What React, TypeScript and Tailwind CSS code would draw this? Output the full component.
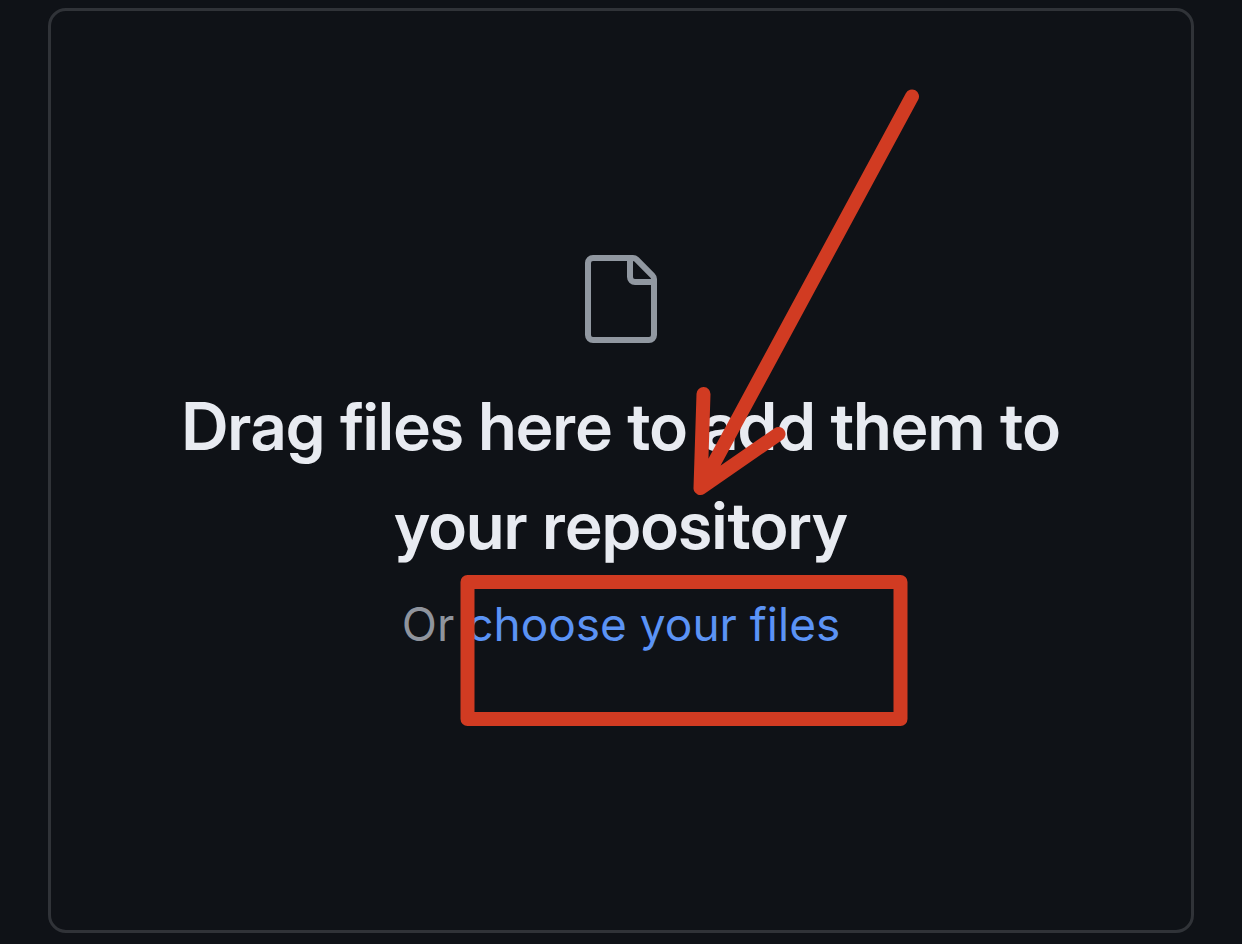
export default function App() {
  return (
    <main className="min-h-screen bg-[#0f1217] px-12 pt-2 pb-3 font-['Inter',sans-serif]">
      <section className="relative flex min-h-[925px] flex-col items-center rounded-[18px] border-3 border-[#303338] px-20 pt-[240px] text-center">
        <svg aria-hidden="true" viewBox="0 0 24 24" className="size-24 shrink-0 fill-[#9198a1]">
          <path d="M3 3a2 2 0 0 1 2-2h9.982a2 2 0 0 1 1.414.586l4.018 4.018A2 2 0 0 1 21 7.018V21a2 2 0 0 1-2 2H5a2 2 0 0 1-2-2Zm2-.5a.5.5 0 0 0-.5.5v18a.5.5 0 0 0 .5.5h14a.5.5 0 0 0 .5-.5V8.5h-4a2 2 0 0 1-2-2v-4Zm10 0v4a.5.5 0 0 0 .5.5h4a.5.5 0 0 0-.146-.336l-4.018-4.018A.5.5 0 0 0 15 2.5Z" />
        </svg>
        <h1 className="mt-[30px] w-full max-w-[960px] font-['Inter_Display','Inter',sans-serif] text-[66px] leading-[99px] font-semibold text-[#e8ebf1]">
          Drag files here to add them to your repository
        </h1>
        <p className="text-[46px] leading-[99px] text-[#8f949d]">
          Or <a href="#files" className="text-[#5b93f5]">choose your files</a>
        </p>
        <svg aria-hidden="true" viewBox="0 0 1140 919" className="pointer-events-none absolute inset-0 h-[919px] w-full fill-none stroke-[#d13b22] stroke-[14]" strokeLinecap="round" strokeLinejoin="round">
          <path d="M861 85.500L649.500 477M652.500 383L649.500 477L727.500 423" />
          <path d="M416.500 571H849.500V708H416.500Z" />
        </svg>
      </section>
    </main>
  );
}
